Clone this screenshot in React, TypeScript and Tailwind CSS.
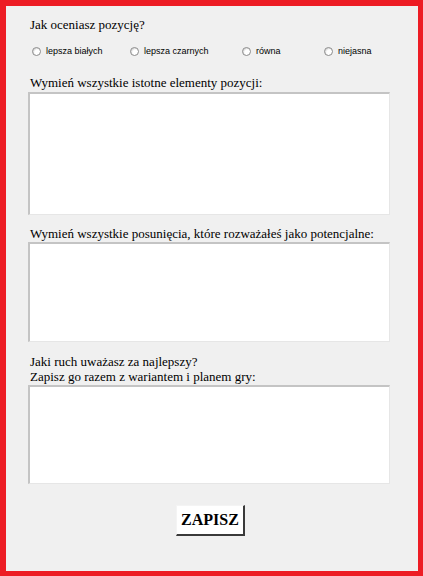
import React from 'react';

const options = [
  { label: 'lepsza białych', w: 'w-[98px]' },
  { label: 'lepsza czarnych', w: 'w-[112px]' },
  { label: 'równa', w: 'w-[82px]' },
  { label: 'niejasna', w: 'w-[70px]' },
];

function Radio({ label, w }: { label: string; w: string }) {
  return (
    <label className={`flex items-center gap-[5px] ${w}`}>
      <span className="w-[9px] h-[9px] rounded-full border border-[#8a8a8a] bg-white shadow-[inset_1px_1px_1px_rgba(0,0,0,0.15)]" />
      <span className="text-[9px] leading-[12px] text-black font-['Liberation_Sans',Arial,sans-serif]">{label}</span>
    </label>
  );
}

function Box({ h }: { h: string }) {
  return (
    <div
      className={`${h} w-[362px] bg-white border-t-2 border-l-2 border-r border-b border-t-[#c4c4c4] border-l-[#c4c4c4] border-r-[#e6e6e6] border-b-[#e6e6e6]`}
    />
  );
}

export default function App() {
  return (
    <div className="w-[423px] h-[576px] bg-[#f0f0f0] border-l-[6px] border-t-[6px] border-r-[5px] border-b-[5px] border-[#ed1c24] font-['Liberation_Serif','Times_New_Roman',serif] text-black">
      <div className="pl-[22px] pt-[11px] flex flex-col">
        <p className="pl-[2px] text-[13px] leading-[16px]">Jak oceniasz pozycję?</p>

        <div className="mt-[12px] pl-[4px] flex items-center">
          {options.map((o) => (
            <Radio key={o.label} label={o.label} w={o.w} />
          ))}
        </div>

        <p className="mt-[18px] pl-[2px] text-[13px] leading-[16px]">Wymień wszystkie istotne elementy pozycji:</p>
        <div className="mt-[1px]">
          <Box h="h-[123px]" />
        </div>

        <p className="mt-[11px] pl-[2px] text-[13px] leading-[16px]">Wymień wszystkie posunięcia, które rozważałeś jako potencjalne:</p>
        <Box h="h-[100px]" />

        <p className="mt-[12px] pl-[2px] text-[13px] leading-[15px]">
          Jaki ruch uważasz za najlepszy?
          <br />
          Zapisz go razem z wariantem i planem gry:
        </p>
        <div className="mt-[1px]">
          <Box h="h-[99px]" />
        </div>

        <div className="mt-[21px] pl-[148px]">
          <button className="w-[69px] h-[31px] bg-white border-t border-l border-r-2 border-b-2 border-t-[#f4f4f4] border-l-[#f4f4f4] border-r-[#3a3a3a] border-b-[#3a3a3a] text-[16px] font-bold leading-none">
            ZAPISZ
          </button>
        </div>
      </div>
    </div>
  );
}
